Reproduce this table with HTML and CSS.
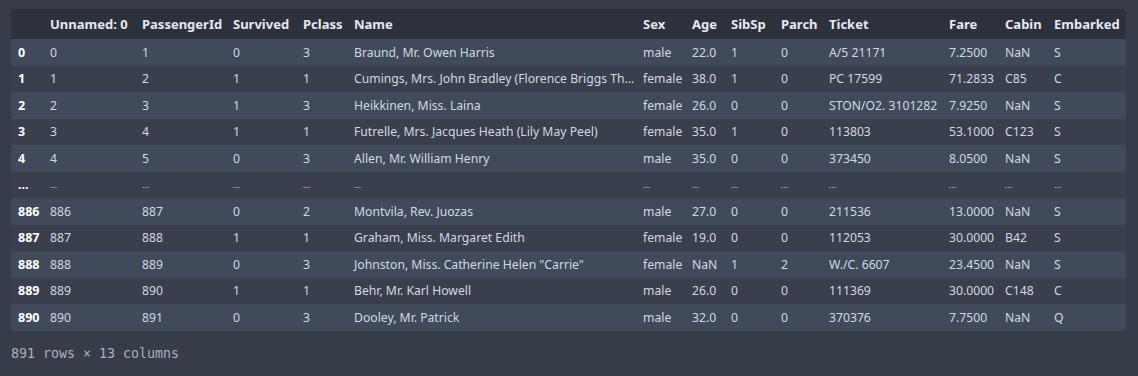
FILE: index.html
```html
<!DOCTYPE html>
<html>
<head>
<meta charset="utf-8">
<link rel="stylesheet" href="styles.css">
</head>
<body>
<div class="output">
  <table class="df">
    <colgroup>
      <col class="c-idx"><col class="c-unnamed"><col class="c-pid"><col class="c-surv"><col class="c-pclass"><col class="c-name"><col class="c-sex"><col class="c-age"><col class="c-sibsp"><col class="c-parch"><col class="c-ticket"><col class="c-fare"><col class="c-cabin"><col class="c-emb">
    </colgroup>
    <thead>
      <tr><th></th><th>Unnamed: 0</th><th>PassengerId</th><th>Survived</th><th>Pclass</th><th>Name</th><th>Sex</th><th>Age</th><th>SibSp</th><th>Parch</th><th>Ticket</th><th>Fare</th><th>Cabin</th><th>Embarked</th></tr>
    </thead>
    <tbody>
      <tr><th>0</th><td>0</td><td>1</td><td>0</td><td>3</td><td>Braund, Mr. Owen Harris</td><td>male</td><td>22.0</td><td>1</td><td>0</td><td>A/5 21171</td><td>7.2500</td><td>NaN</td><td>S</td></tr>
      <tr><th>1</th><td>1</td><td>2</td><td>1</td><td>1</td><td>Cumings, Mrs. John Bradley (Florence Briggs Th…</td><td>female</td><td>38.0</td><td>1</td><td>0</td><td>PC 17599</td><td>71.2833</td><td>C85</td><td>C</td></tr>
      <tr><th>2</th><td>2</td><td>3</td><td>1</td><td>3</td><td>Heikkinen, Miss. Laina</td><td>female</td><td>26.0</td><td>0</td><td>0</td><td>STON/O2. 3101282</td><td>7.9250</td><td>NaN</td><td>S</td></tr>
      <tr><th>3</th><td>3</td><td>4</td><td>1</td><td>1</td><td>Futrelle, Mrs. Jacques Heath (Lily May Peel)</td><td>female</td><td>35.0</td><td>1</td><td>0</td><td>113803</td><td>53.1000</td><td>C123</td><td>S</td></tr>
      <tr><th>4</th><td>4</td><td>5</td><td>0</td><td>3</td><td>Allen, Mr. William Henry</td><td>male</td><td>35.0</td><td>0</td><td>0</td><td>373450</td><td>8.0500</td><td>NaN</td><td>S</td></tr>
      <tr class="ellipsis"><th>...</th><td>...</td><td>...</td><td>...</td><td>...</td><td>...</td><td>...</td><td>...</td><td>...</td><td>...</td><td>...</td><td>...</td><td>...</td><td>...</td></tr>
      <tr><th>886</th><td>886</td><td>887</td><td>0</td><td>2</td><td>Montvila, Rev. Juozas</td><td>male</td><td>27.0</td><td>0</td><td>0</td><td>211536</td><td>13.0000</td><td>NaN</td><td>S</td></tr>
      <tr><th>887</th><td>887</td><td>888</td><td>1</td><td>1</td><td>Graham, Miss. Margaret Edith</td><td>female</td><td>19.0</td><td>0</td><td>0</td><td>112053</td><td>30.0000</td><td>B42</td><td>S</td></tr>
      <tr><th>888</th><td>888</td><td>889</td><td>0</td><td>3</td><td>Johnston, Miss. Catherine Helen "Carrie"</td><td>female</td><td>NaN</td><td>1</td><td>2</td><td>W./C. 6607</td><td>23.4500</td><td>NaN</td><td>S</td></tr>
      <tr><th>889</th><td>889</td><td>890</td><td>1</td><td>1</td><td>Behr, Mr. Karl Howell</td><td>male</td><td>26.0</td><td>0</td><td>0</td><td>111369</td><td>30.0000</td><td>C148</td><td>C</td></tr>
      <tr><th>890</th><td>890</td><td>891</td><td>0</td><td>3</td><td>Dooley, Mr. Patrick</td><td>male</td><td>32.0</td><td>0</td><td>0</td><td>370376</td><td>7.7500</td><td>NaN</td><td>Q</td></tr>
    </tbody>
  </table>
  <p class="shape">891 rows × 13 columns</p>
</div>
</body>
</html>
```
FILE: styles.css
```css
html, body {
  margin: 0;
  background: #363c48;
}
.output {
  padding: 9px 12px 0 11px;
  font-family: "Noto Sans", "Open Sans", sans-serif;
  font-size: 12.2px;
  color: #dfe3ea;
}
.df {
  table-layout: fixed;
  width: 1115px;
  border-collapse: collapse;
  border-radius: 4px;
  overflow: hidden;
}
.c-idx { width: 32px; }
.c-unnamed { width: 92px; }
.c-pid { width: 91px; }
.c-surv { width: 70px; }
.c-pclass { width: 51px; }
.c-name { width: 289px; }
.c-sex { width: 49px; }
.c-age { width: 39px; }
.c-sibsp { width: 50px; }
.c-parch { width: 48px; }
.c-ticket { width: 120px; }
.c-fare { width: 56px; }
.c-cabin { width: 49px; }
.c-emb { width: 79px; }
.df th, .df td {
  padding: 0 0 0 7px;
  text-align: left;
  white-space: nowrap;
  overflow: hidden;
}
.df thead tr {
  background: #2c313c;
  height: 30px;
}
.df thead th {
  font-size: 13px;
  font-weight: 700;
  color: #e6e9ef;
}
.df tbody tr {
  height: 26.5px;
  background: #393f4c;
}
.df tbody tr:nth-child(odd) {
  background: #414a5b;
}
.df tbody th {
  font-size: 12.5px;
  font-weight: 700;
  color: #ffffff;
}
.df tbody td {
  color: #d3d8e0;
}
.df .ellipsis td {
  font-size: 9px;
}
.shape {
  margin: 15px 0 0;
  font-family: "DejaVu Sans Mono", monospace;
  font-size: 13.3px;
  color: #a9b0bd;
}
```
